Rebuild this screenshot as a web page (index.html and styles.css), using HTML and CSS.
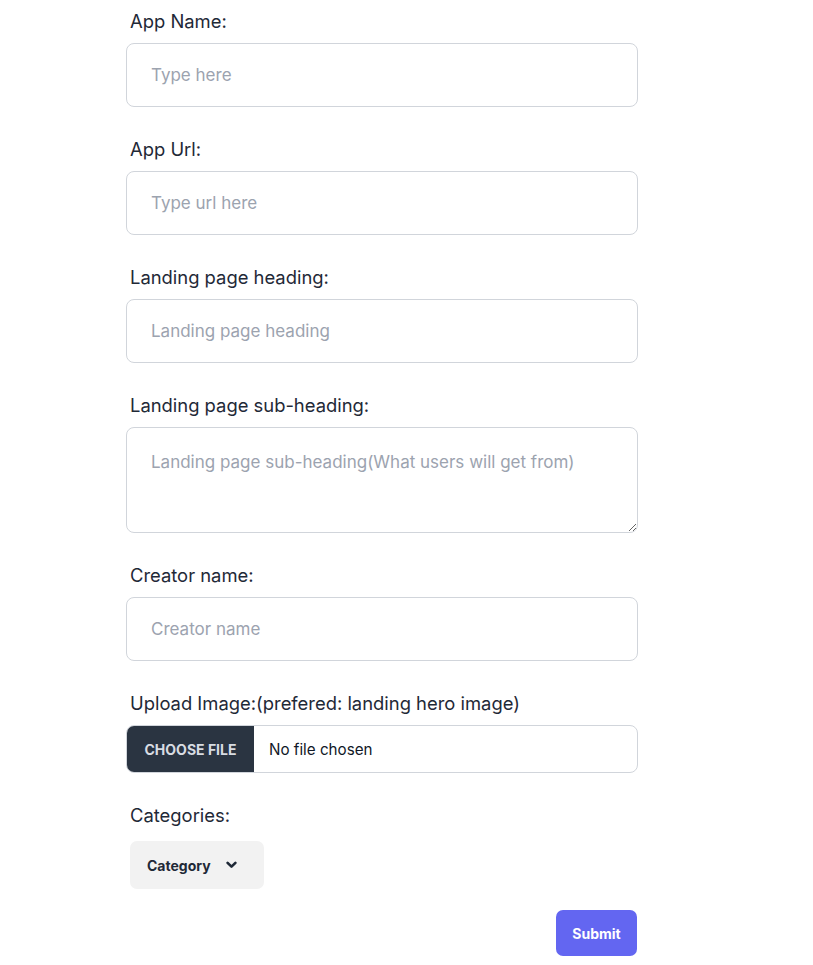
FILE: index.html
```html
<!DOCTYPE html>
<html lang="en">
<head>
  <meta charset="UTF-8">
  <meta name="viewport" content="width=device-width, initial-scale=1.0">
  <title>Submit App</title>
  <link rel="stylesheet" href="styles.css">
</head>
<body>

  <!-- App Form -->
  <form class="app-form" onsubmit="return false;">
    <label class="field-label" for="app-name">App Name:</label>
    <input class="field-input" type="text" id="app-name" placeholder="Type here">

    <label class="field-label" for="app-url">App Url:</label>
    <input class="field-input" type="text" id="app-url" placeholder="Type url here">

    <label class="field-label" for="heading">Landing page heading:</label>
    <input class="field-input" type="text" id="heading" placeholder="Landing page heading">

    <label class="field-label" for="sub-heading">Landing page sub-heading:</label>
    <textarea class="field-input field-area" id="sub-heading" placeholder="Landing page sub-heading(What users will get from)"></textarea>

    <label class="field-label" for="creator">Creator name:</label>
    <input class="field-input" type="text" id="creator" placeholder="Creator name">

    <label class="field-label" for="image">Upload Image:(prefered: landing hero image)</label>
    <label class="file-input">
      <input type="file" id="image" class="file-hidden">
      <span class="file-button">CHOOSE FILE</span>
      <span class="file-name">No file chosen</span>
    </label>

    <span class="field-label">Categories:</span>
    <div class="dropdown">
      <button type="button" class="dropdown-toggle">
        Category
        <svg width="11" height="8" viewBox="0 0 11 8" fill="none" stroke="currentColor" stroke-width="2.6" stroke-linecap="round" stroke-linejoin="round">
          <polyline points="1.6,1.8 5.5,5.7 9.4,1.8"/>
        </svg>
      </button>
    </div>

    <div class="form-actions">
      <button type="submit" class="submit-btn">Submit</button>
    </div>
  </form>

</body>
</html>
```

FILE: styles.css
```css
/* General Reset */
* {
  margin: 0;
  padding: 0;
  box-sizing: border-box;
}

body {
  font-family: 'Inter', 'Liberation Sans', sans-serif;
  background: #fff;
  color: #1f2937;
}

/* Form */
.app-form {
  width: 512px;
  margin-left: 126px;
  padding-top: 7px;
  display: flex;
  flex-direction: column;
}

.field-label {
  font-size: 18.4px;
  line-height: 28px;
  padding-left: 4px;
  margin-bottom: 8px;
  color: #1f2937;
}

.field-input {
  height: 64px;
  padding: 0 24px;
  font-family: inherit;
  font-size: 17px;
  color: #1f2937;
  border: 1px solid #d1d5db;
  border-radius: 8px;
  margin-bottom: 28px;
  outline: none;
}

.field-input::placeholder {
  color: #9ca3af;
}

.field-area {
  height: 106px;
  padding: 22px 24px;
  line-height: 24px;
  resize: vertical;
  margin-bottom: 28px;
}

/* File upload */
.file-input {
  display: flex;
  align-items: center;
  height: 48px;
  border: 1px solid #d1d5db;
  border-radius: 8px;
  overflow: hidden;
  margin-bottom: 28px;
  cursor: pointer;
}

.file-hidden {
  display: none;
}

.file-button {
  height: 100%;
  width: 127px;
  display: flex;
  align-items: center;
  justify-content: center;
  background-color: #2a3441;
  color: #d8dce2;
  font-size: 14px;
  font-weight: 700;
}

.file-name {
  padding-left: 15px;
  font-size: 15.2px;
  color: #111827;
}

/* Dropdown */
.dropdown {
  padding-left: 4px;
  margin-top: 4px;
}

.dropdown-toggle {
  display: inline-flex;
  align-items: center;
  gap: 15px;
  height: 48px;
  width: 134px;
  padding: 0 17px;
  background-color: #f2f2f2;
  border: none;
  border-radius: 7px;
  font-family: inherit;
  font-size: 14px;
  font-weight: 700;
  color: #1f2937;
  cursor: pointer;
}

/* Submit */
.form-actions {
  display: flex;
  justify-content: flex-end;
  margin-top: 21px;
}

.submit-btn {
  width: 81px;
  height: 46px;
  margin-right: 1px;
  background-color: #6366f1;
  color: white;
  border: none;
  border-radius: 7px;
  font-family: inherit;
  font-size: 14px;
  font-weight: 700;
  cursor: pointer;
}
```
